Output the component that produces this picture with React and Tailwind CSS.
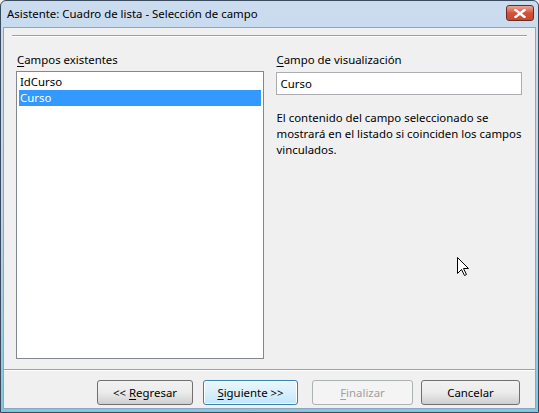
import React from 'react';

const font = { fontFamily: '"Noto Sans", "Open Sans", sans-serif' };

const Btn = ({ children, className = '', variant = 'normal' }) => {
  const styles = {
    normal: 'border-[#707070] bg-gradient-to-b from-[#f2f2f2] via-[#ebebeb] to-[#cfcfcf] text-black',
    default: 'border-[#3c7fb1] bg-gradient-to-b from-[#eaf6fd] via-[#d9f0fc] to-[#bee6fd] text-black shadow-[inset_0_0_0_1px_#ffffff]',
    disabled: 'border-[#adb2b5] bg-[#f4f4f4] text-[#a0a0a0]',
  };
  return (
    <button
      className={`h-[25px] rounded-[3px] border text-[11.4px] leading-none flex items-center justify-center ${styles[variant]} ${className}`}
    >
      {children}
    </button>
  );
};

const Cursor = () => (
  <svg className="absolute left-[457px] top-[257px]" width="13" height="20" viewBox="0 0 13 20">
    <path
      d="M0.5 0.5 L0.5 16.5 L4.5 12.5 L7.5 18.5 L9.5 17.5 L6.5 11.5 L11.5 11.5 Z"
      fill="#ffffff"
      stroke="#000000"
      strokeWidth="1"
      strokeLinejoin="miter"
    />
  </svg>
);

const App = () => {
  return (
    <div style={font} className="relative w-[539px] h-[413px] overflow-hidden bg-[#f0f0f0]">
      <div className="w-[539px] h-[413px] flex flex-col rounded-t-[6px] border border-[#3a4b5e] bg-gradient-to-b from-[#cbdcef] via-[#bfd5ec] to-[#7ec8e0]">
        {/* title bar */}
        <div className="h-[26px] flex items-center pl-[6px] pr-[4px] shrink-0">
          <span className="text-[11.4px] text-black leading-none">Asistente: Cuadro de lista - Selección de campo</span>
          <div className="ml-auto mt-[-2px] w-[28px] h-[16px] rounded-[3px] border border-[#6d2a20] bg-gradient-to-b from-[#e9a99a] via-[#d2513a] to-[#c44a2f] flex items-center justify-center">
            <svg width="12" height="9" viewBox="0 0 12 9">
              <path d="M1.5 1 L10.5 8 M10.5 1 L1.5 8" stroke="#ffffff" strokeWidth="2.4" strokeLinecap="square" />
            </svg>
          </div>
        </div>

        {/* content */}
        <div className="flex-1 mx-[2px] mb-[3px] bg-[#f0f0f0] border border-[#8ea5bf] flex flex-col">
          <div className="pt-[7px] px-[8px]">
            <div className="h-[2px] border-t border-[#a0a0a0] border-b border-b-white" />
          </div>

          <div className="flex pl-[12px] pr-[13px] pt-[15px]">
            <div className="w-[248px] flex flex-col">
              <div className="text-[11.4px] leading-[16px] text-black pl-[1px]">
                <span className="underline underline-offset-2">C</span>ampos existentes
              </div>
              <div className="mt-[3px] h-[288px] bg-white border border-[#828790] p-[2px] text-[11.4px] leading-[16px]">
                <div className="pl-[1px] text-black">IdCurso</div>
                <div className="pl-[1px] bg-[#3399ff] text-white">Curso</div>
              </div>
            </div>

            <div className="ml-[12px] w-[247px] flex flex-col">
              <div className="text-[11.4px] leading-[16px] text-black pl-[1px]">
                <span className="underline underline-offset-2">C</span>ampo de visualización
              </div>
              <div className="mt-[4px] h-[23px] bg-white border border-[#abadb3] flex items-center pl-[4px] text-[11.4px] text-black">
                Curso
              </div>
              <div className="mt-[15px] text-[11.4px] leading-[16px] text-black pl-[1px]">
                El contenido del campo seleccionado se mostrará en el listado si coinciden los campos vinculados.
              </div>
            </div>
          </div>

          <div className="mt-[10px] h-[2px] border-t border-[#a0a0a0] border-b border-b-white" />

          <div className="flex pt-[9px]">
            <Btn className="ml-[93px] w-[96px]">
              &lt;&lt; <span className="underline underline-offset-2 ml-[3px]">R</span>egresar
            </Btn>
            <Btn variant="default" className="ml-[10px] w-[95px]">
              <span className="underline underline-offset-2">S</span>iguiente &gt;&gt;
            </Btn>
            <Btn variant="disabled" className="ml-[14px] w-[101px]">
              <span className="underline underline-offset-2">F</span>inalizar
            </Btn>
            <Btn className="ml-[8px] w-[99px]">Cancelar</Btn>
          </div>
        </div>
      </div>
      <Cursor />
    </div>
  );
};

export default App;
